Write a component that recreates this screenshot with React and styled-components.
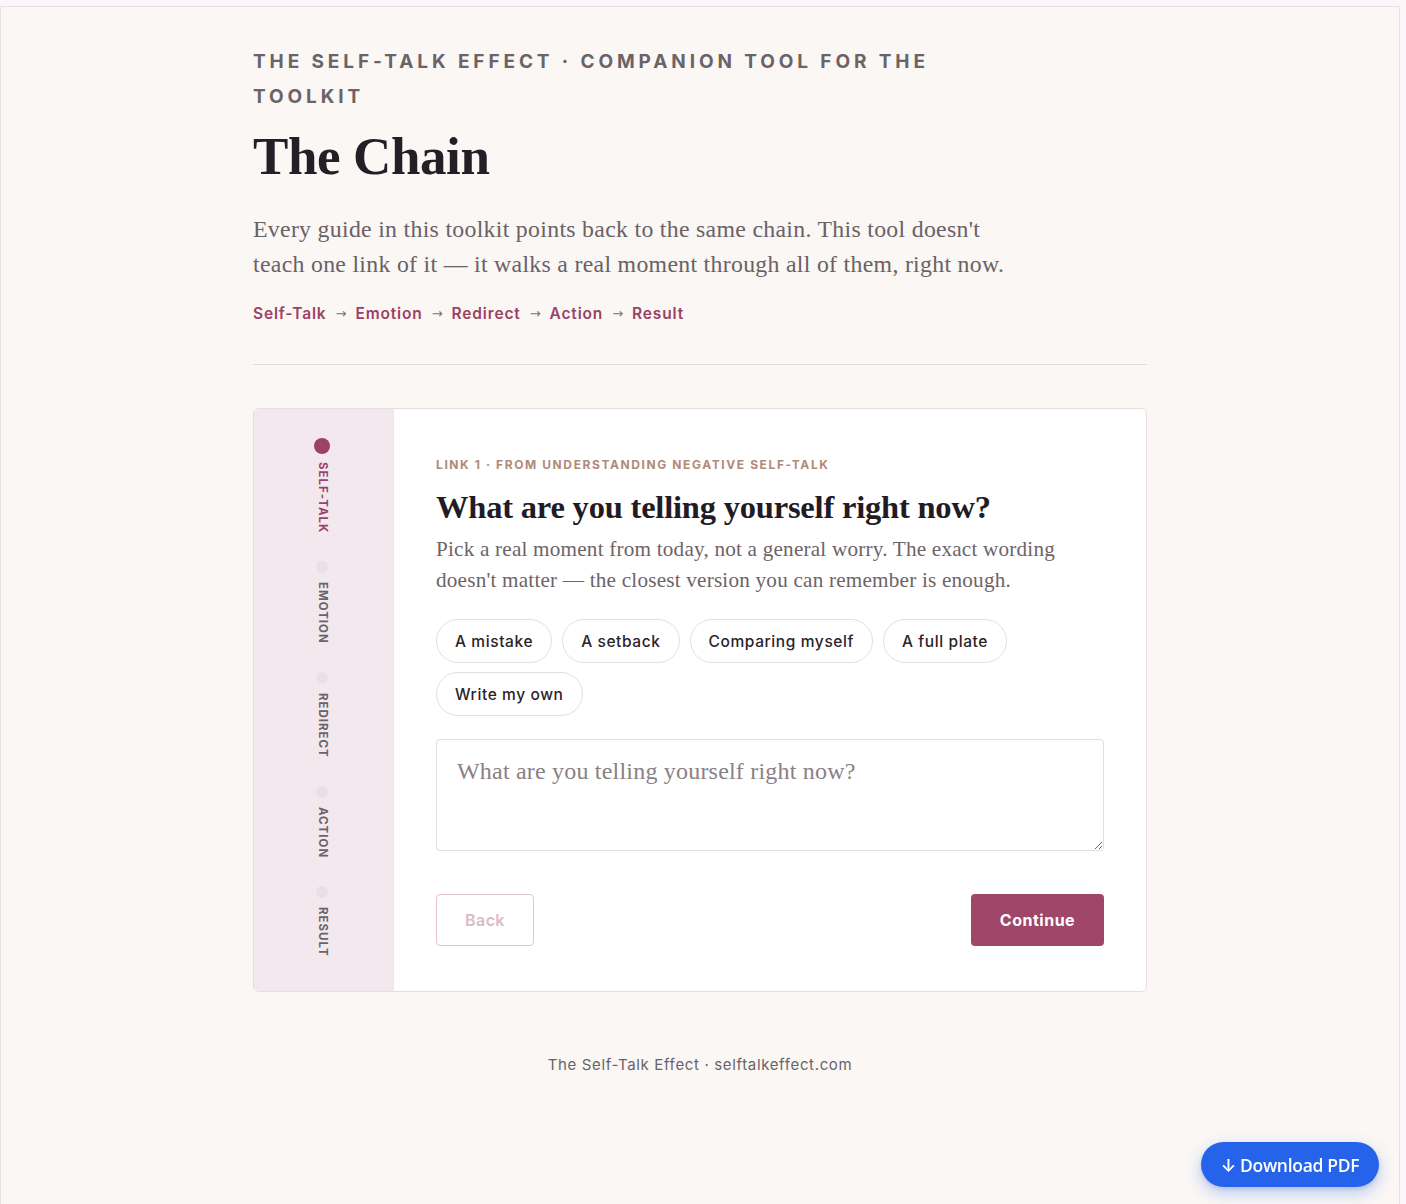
import React from "react";
import styled, { createGlobalStyle } from "styled-components";

const Global = createGlobalStyle`
  html, body { margin: 0; padding: 0; background: #fcf6fb; }
  body { font-family: Inter, "Liberation Sans", sans-serif; }
  * { box-sizing: border-box; }
`;

const SANS = `Inter, "Liberation Sans", sans-serif`;
const SERIF = `"Liberation Serif", "DejaVu Serif", serif`;

const Frame = styled.div`
  margin-top: 6px;
  width: 1400px;
  min-height: 1198px;
  background: #faf7f5;
  border: 1px solid #e7e0e5;
  border-bottom: none;
  padding: 37px 0 60px;
`;

const Container = styled.div`
  width: 894px;
  margin: 0 auto;
`;

const Header = styled.header`
  max-width: 780px;
`;

const Eyebrow = styled.div`
  font-family: ${SANS};
  font-size: 19px;
  font-weight: 700;
  letter-spacing: 3.9px;
  line-height: 35px;
  color: #6a6367;
  text-transform: uppercase;
  max-width: 700px;
`;

const Title = styled.h1`
  font-family: ${SERIF};
  font-size: 53px;
  font-weight: 700;
  line-height: 57px;
  color: #241e26;
  margin: 14px 0 0;
  letter-spacing: -0.4px;
`;

const Lede = styled.p`
  font-family: ${SERIF};
  font-size: 23.8px;
  letter-spacing: 0.3px;
  line-height: 35px;
  color: #6b6166;
  margin: 27px 0 0;
  max-width: 765px;
`;

const ChainRow = styled.div`
  display: flex;
  align-items: center;
  gap: 9px;
  margin-top: 21px;
  font-family: ${SANS};
  font-size: 15.5px;
  font-weight: 600;
  line-height: 22px;
`;

const ChainLink = styled.span`
  color: #9a4166;
  letter-spacing: 0.85px;
`;

const Arrow = styled.span`
  color: #7a7276;
  font-weight: 400;
  font-family: "DejaVu Sans", sans-serif;
  font-size: 13px;
`;

const Divider = styled.hr`
  border: none;
  border-top: 1px solid #e4dedb;
  margin: 39px 0 43px;
`;

const Card = styled.section`
  display: flex;
  background: #fff;
  border: 1px solid #e6dfe0;
  border-radius: 6px;
  overflow: hidden;
`;

const Rail = styled.nav`
  width: 140px;
  flex: none;
  background: #f3e8ee;
  border-right: 1px solid #efe4ea;
  display: flex;
  flex-direction: column;
  align-items: center;
  padding: 29px 4px 0 0;
`;

const Step = styled.div`
  display: flex;
  flex-direction: column;
  align-items: center;
  gap: ${(p) => (p.$active ? "8px" : "9px")};
  margin-bottom: 28px;
`;

const Dot = styled.span`
  width: ${(p) => (p.$active ? "16px" : "12px")};
  height: ${(p) => (p.$active ? "16px" : "12px")};
  border-radius: 50%;
  background: ${(p) => (p.$active ? "#9c4267" : "#eadfe5")};
`;

const StepLabel = styled.span`
  writing-mode: vertical-rl;
  font-family: ${SANS};
  font-size: 11.5px;
  font-weight: 700;
  letter-spacing: 1px;
  color: ${(p) => (p.$active ? "#9c4267" : "#6a6367")};
  margin-left: 2px;
`;

const Main = styled.div`
  flex: 1;
  padding: 48px 42px 45px;
`;

const StepEyebrow = styled.div`
  font-family: ${SANS};
  font-size: 12px;
  font-weight: 700;
  letter-spacing: 1.6px;
  color: #b08a78;
  line-height: 16px;
`;

const Question = styled.h2`
  font-family: ${SERIF};
  font-size: 32.5px;
  font-weight: 700;
  line-height: 38px;
  color: #221b24;
  margin: 15px 0 0;
  letter-spacing: -0.2px;
`;

const Help = styled.p`
  font-family: ${SERIF};
  font-size: 21.2px;
  letter-spacing: 0.2px;
  line-height: 31px;
  color: #6d6368;
  margin: 8px 0 0;
  max-width: 630px;
`;

const Chips = styled.div`
  display: flex;
  flex-wrap: wrap;
  gap: 9px 10px;
  margin-top: 23px;
`;

const Chip = styled.button`
  height: 44px;
  padding: 0 18px;
  border: 1px solid #e4dfe0;
  border-radius: 22px;
  background: #fff;
  font-family: ${SANS};
  font-size: 15.5px;
  font-weight: 500;
  color: #2a2329;
  letter-spacing: 0.6px;
  cursor: pointer;
`;

const Field = styled.textarea`
  display: block;
  width: 100%;
  height: 112px;
  margin-top: 23px;
  padding: 18px 20px;
  border: 1px solid #e2dcdd;
  border-radius: 4px;
  font-family: ${SERIF};
  font-size: 24px;
  letter-spacing: 0.2px;
  color: #2a2329;
  background: #fff;
  resize: vertical;
  &::placeholder { color: #8a8085; }
  &:focus { outline: none; }
`;

const Actions = styled.div`
  display: flex;
  justify-content: space-between;
  margin-top: 43px;
`;

const GhostButton = styled.button`
  height: 52px;
  width: 98px;
  border: 1px solid #e3c4d0;
  border-radius: 4px;
  background: #fff;
  font-family: ${SANS};
  font-size: 16px;
  font-weight: 600;
  letter-spacing: 0.4px;
  color: #dcb9c7;
`;

const PrimaryButton = styled.button`
  height: 52px;
  width: 133px;
  border: none;
  border-radius: 4px;
  background: #a04668;
  font-family: ${SANS};
  font-size: 16px;
  font-weight: 700;
  color: #fff;
  letter-spacing: 0.5px;
`;

const Footer = styled.footer`
  text-align: center;
  margin-top: 63px;
  font-family: ${SANS};
  font-size: 15px;
  color: #6a6367;
  letter-spacing: 0.65px;
`;

const DownloadButton = styled.button`
  position: fixed;
  right: 27px;
  bottom: 17px;
  height: 45px;
  width: 178px;
  border: none;
  border-radius: 23px;
  background: #2563eb;
  color: #fff;
  font-family: "Open Sans", ${SANS};
  font-size: 17.5px;
  font-weight: 600;
  box-shadow: 0 6px 16px rgba(37, 99, 235, 0.3), 0 2px 4px rgba(0, 0, 0, 0.12);
  letter-spacing: -0.3px;
`;

const steps = ["Self-Talk", "Emotion", "Redirect", "Action", "Result"];
const chips = ["A mistake", "A setback", "Comparing myself", "A full plate", "Write my own"];

export default function App() {
  return (
    <>
      <Global />
      <Frame>
        <Container>
          <Header>
            <Eyebrow>The Self-Talk Effect · Companion tool for the toolkit</Eyebrow>
            <Title>The Chain</Title>
            <Lede>
              Every guide in this toolkit points back to the same chain. This tool doesn't teach one link of it — it
              walks a real moment through all of them, right now.
            </Lede>
            <ChainRow>
              {steps.map((s, i) => (
                <React.Fragment key={s}>
                  {i > 0 && <Arrow>→</Arrow>}
                  <ChainLink>{s}</ChainLink>
                </React.Fragment>
              ))}
            </ChainRow>
          </Header>
          <Divider />
          <Card>
            <Rail>
              {steps.map((s, i) => (
                <Step key={s} $active={i === 0}>
                  <Dot $active={i === 0} />
                  <StepLabel $active={i === 0}>{s.toUpperCase()}</StepLabel>
                </Step>
              ))}
            </Rail>
            <Main>
              <StepEyebrow>LINK 1 · FROM UNDERSTANDING NEGATIVE SELF-TALK</StepEyebrow>
              <Question>What are you telling yourself right now?</Question>
              <Help>
                Pick a real moment from today, not a general worry. The exact wording doesn't matter — the closest
                version you can remember is enough.
              </Help>
              <Chips>
                {chips.map((c) => (
                  <Chip key={c}>{c}</Chip>
                ))}
              </Chips>
              <Field placeholder="What are you telling yourself right now?" />
              <Actions>
                <GhostButton disabled>Back</GhostButton>
                <PrimaryButton>Continue</PrimaryButton>
              </Actions>
            </Main>
          </Card>
          <Footer>The Self-Talk Effect · selftalkeffect.com</Footer>
        </Container>
      </Frame>
      <DownloadButton>↓ Download PDF</DownloadButton>
    </>
  );
}
